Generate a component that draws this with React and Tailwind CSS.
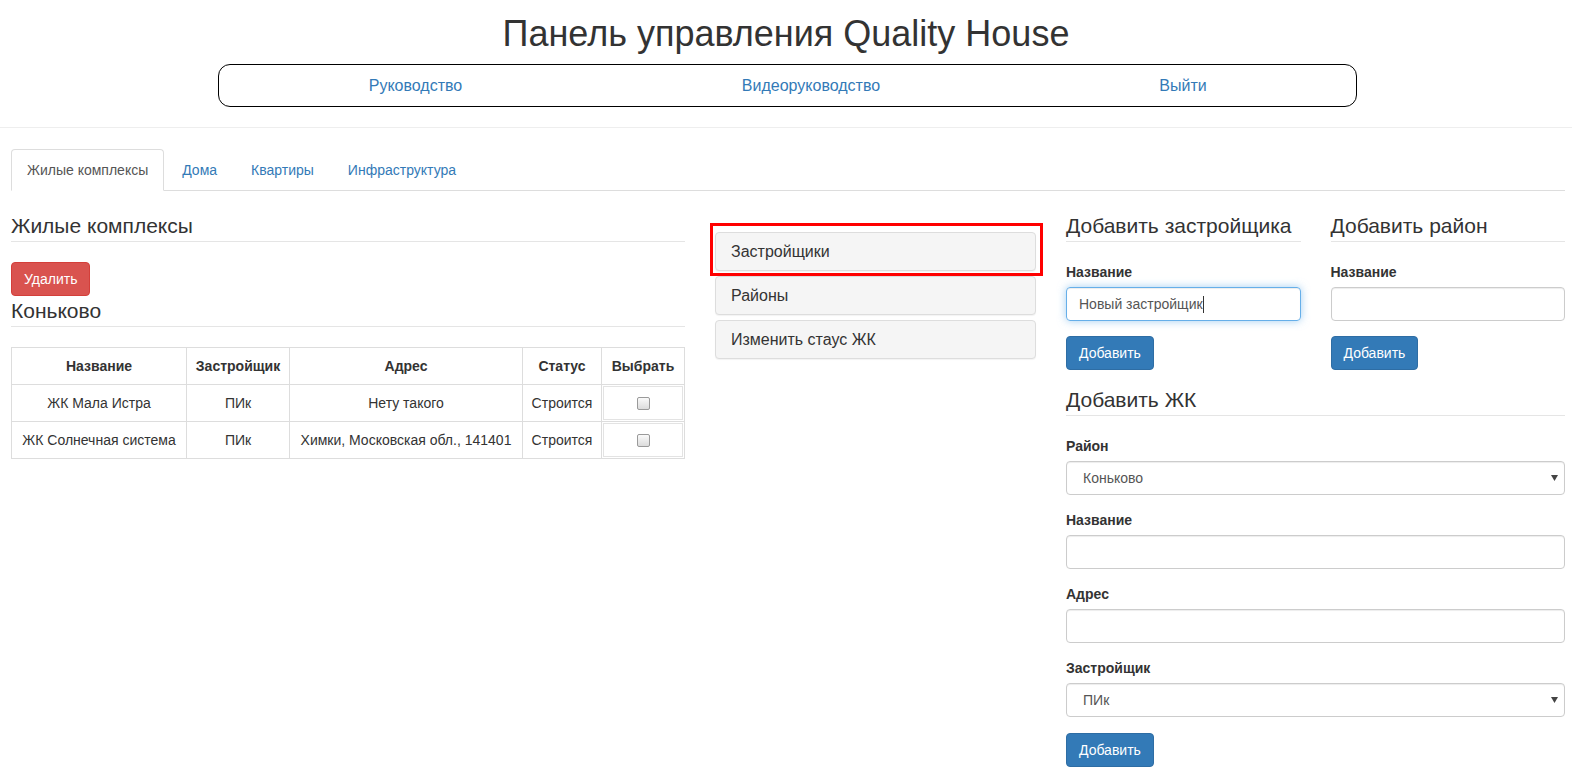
import React from 'react';

const Legend = ({ children, className = '' }) => (
    <div className={`text-[21px] leading-[30px] text-[#333] border-b border-[#e5e5e5] ${className}`}>
        {children}
    </div>
);

const Label = ({ children }) => (
    <div className="font-bold leading-[20px] mb-[5px]">{children}</div>
);

const TextInput = ({ value, focused }) => (
    <div
        className={
            focused
                ? 'h-[34px] border border-[#66afe9] rounded-[4px] px-[12px] flex items-center text-[#555] shadow-[inset_0_1px_1px_rgba(0,0,0,0.075),0_0_8px_rgba(102,175,233,0.6)]'
                : 'h-[34px] border border-[#ccc] rounded-[4px] px-[12px] flex items-center text-[#555] shadow-[inset_0_1px_1px_rgba(0,0,0,0.075)]'
        }
    >
        {value}
        {focused && <span className="inline-block w-px h-[17px] bg-[#333]" />}
    </div>
);

const Select = ({ value }) => (
    <div className="h-[34px] border border-[#ccc] rounded-[4px] pl-[16px] pr-[6px] flex items-center justify-between text-[#555] shadow-[inset_0_1px_1px_rgba(0,0,0,0.075)]">
        <span>{value}</span>
        <svg width="7" height="6" viewBox="0 0 7 6">
            <polygon points="0,0 7,0 3.5,6" fill="#444" />
        </svg>
    </div>
);

const BlueButton = () => (
    <button className="bg-[#337ab7] border border-[#2e6da4] text-white rounded-[4px] px-[12px] py-[6px] leading-[20px]">
        Добавить
    </button>
);

const Checkbox = () => (
    <span className="inline-block w-[13px] h-[13px] rounded-[2px] border border-[#9a9a9a] bg-gradient-to-b from-[#fafafa] to-[#dcdcdc]" />
);

const rows = [
    { name: 'ЖК Мала Истра', dev: 'ПИк', addr: 'Нету такого', status: 'Строится' },
    { name: 'ЖК Солнечная система', dev: 'ПИк', addr: 'Химки, Московская обл., 141401', status: 'Строится' },
];

const tabs = ['Жилые комплексы', 'Дома', 'Квартиры', 'Инфраструктура'];

const panelCls = 'h-[39px] flex items-center px-[15px] bg-[#f5f5f5] border border-[#ddd] rounded-[4px] shadow-[0_1px_1px_rgba(0,0,0,0.05)]';

export default function App() {
    return (
        <div className="h-screen overflow-hidden bg-white text-[#333] text-[14px] leading-[20px] font-['Liberation_Sans',Arial,sans-serif]">

            {/* Header */}
            <header className="pt-[14px]">
                <h1 className="text-center text-[36px] leading-[40px]">
                    Панель управления Quality House
                </h1>
                <nav className="ml-[218px] mt-[10px] w-[1139px] h-[43px] border border-black rounded-[12px] grid grid-cols-[393px_398px_1fr] items-center text-[16px] text-[#337ab7]">
                    <a className="text-center">Руководство</a>
                    <a className="text-center">Видеоруководство</a>
                    <a className="text-center">Выйти</a>
                </nav>
            </header>

            <div className="mt-[20px] border-t border-[#eee]" />

            <main className="pl-[11px] pr-[7px] pt-[21px]">

                {/* Tabs */}
                <ul className="flex border-b border-[#ddd]">
                    {tabs.map((t, i) => (
                        <li key={t} className="mr-[2px] -mb-px">
                            <a
                                className={
                                    i === 0
                                        ? 'block px-[15px] py-[10px] leading-[20px] border border-[#ddd] border-b-white rounded-t-[4px] bg-white text-[#555]'
                                        : 'block px-[15px] py-[10px] leading-[20px] border border-transparent rounded-t-[4px] text-[#337ab7]'
                                }
                            >
                                {t}
                            </a>
                        </li>
                    ))}
                </ul>

                <div className="mt-[20px] grid grid-cols-[674px_321px_1fr] gap-x-[30px] items-start">

                    {/* Left column */}
                    <div>
                        <Legend className="mb-[20px]">Жилые комплексы</Legend>
                        <button className="bg-[#d9534f] border border-[#d43f3a] text-white rounded-[4px] px-[12px] py-[6px] leading-[20px]">
                            Удалить
                        </button>
                        <Legend className="mb-[20px]">Коньково</Legend>

                        <table className="w-full table-fixed border-collapse border border-[#ddd]">
                            <colgroup>
                                <col className="w-[175px]" />
                                <col className="w-[103px]" />
                                <col className="w-[233px]" />
                                <col className="w-[79px]" />
                                <col />
                            </colgroup>
                            <thead>
                                <tr>
                                    {['Название', 'Застройщик', 'Адрес', 'Статус', 'Выбрать'].map((h) => (
                                        <th key={h} className="border border-[#ddd] p-[8px] font-bold text-center whitespace-nowrap">
                                            {h}
                                        </th>
                                    ))}
                                </tr>
                            </thead>
                            <tbody>
                                {rows.map((r) => (
                                    <tr key={r.name}>
                                        <td className="border border-[#ddd] p-[8px] text-center whitespace-nowrap">{r.name}</td>
                                        <td className="border border-[#ddd] p-[8px] text-center">{r.dev}</td>
                                        <td className="border border-[#ddd] p-[8px] text-center whitespace-nowrap">{r.addr}</td>
                                        <td className="border border-[#ddd] p-[8px] text-center">{r.status}</td>
                                        <td className="border border-[#ddd] p-[1px]">
                                            <div className="h-[34px] border border-[#e3e3e3] flex items-center justify-center">
                                                <Checkbox />
                                            </div>
                                        </td>
                                    </tr>
                                ))}
                            </tbody>
                        </table>
                    </div>

                    {/* Middle column */}
                    <div className="pt-[21px] flex flex-col gap-[5px] text-[16px]">
                        <div className="relative">
                            <div className={panelCls}>Застройщики</div>
                            <div className="absolute left-[-5px] top-[-9px] w-[333px] h-[53px] border-[3px] border-[#ff0000]" />
                        </div>
                        <div className={panelCls}>Районы</div>
                        <div className={panelCls}>Изменить стаус ЖК</div>
                    </div>

                    {/* Right column */}
                    <div>
                        <div className="grid grid-cols-2 gap-x-[30px]">
                            <div>
                                <Legend className="mb-[20px]">Добавить застройщика</Legend>
                                <Label>Название</Label>
                                <div className="mb-[15px]">
                                    <TextInput value="Новый застройщик" focused />
                                </div>
                                <BlueButton />
                            </div>
                            <div>
                                <Legend className="mb-[20px]">Добавить район</Legend>
                                <Label>Название</Label>
                                <div className="mb-[15px]">
                                    <TextInput value="" />
                                </div>
                                <BlueButton />
                            </div>
                        </div>

                        <Legend className="mt-[15px] mb-[20px]">Добавить ЖК</Legend>
                        <div className="mb-[15px]">
                            <Label>Район</Label>
                            <Select value="Коньково" />
                        </div>
                        <div className="mb-[15px]">
                            <Label>Название</Label>
                            <TextInput value="" />
                        </div>
                        <div className="mb-[15px]">
                            <Label>Адрес</Label>
                            <TextInput value="" />
                        </div>
                        <div className="mb-[16px]">
                            <Label>Застройщик</Label>
                            <Select value="ПИк" />
                        </div>
                        <BlueButton />
                    </div>

                </div>
            </main>
        </div>
    );
}
